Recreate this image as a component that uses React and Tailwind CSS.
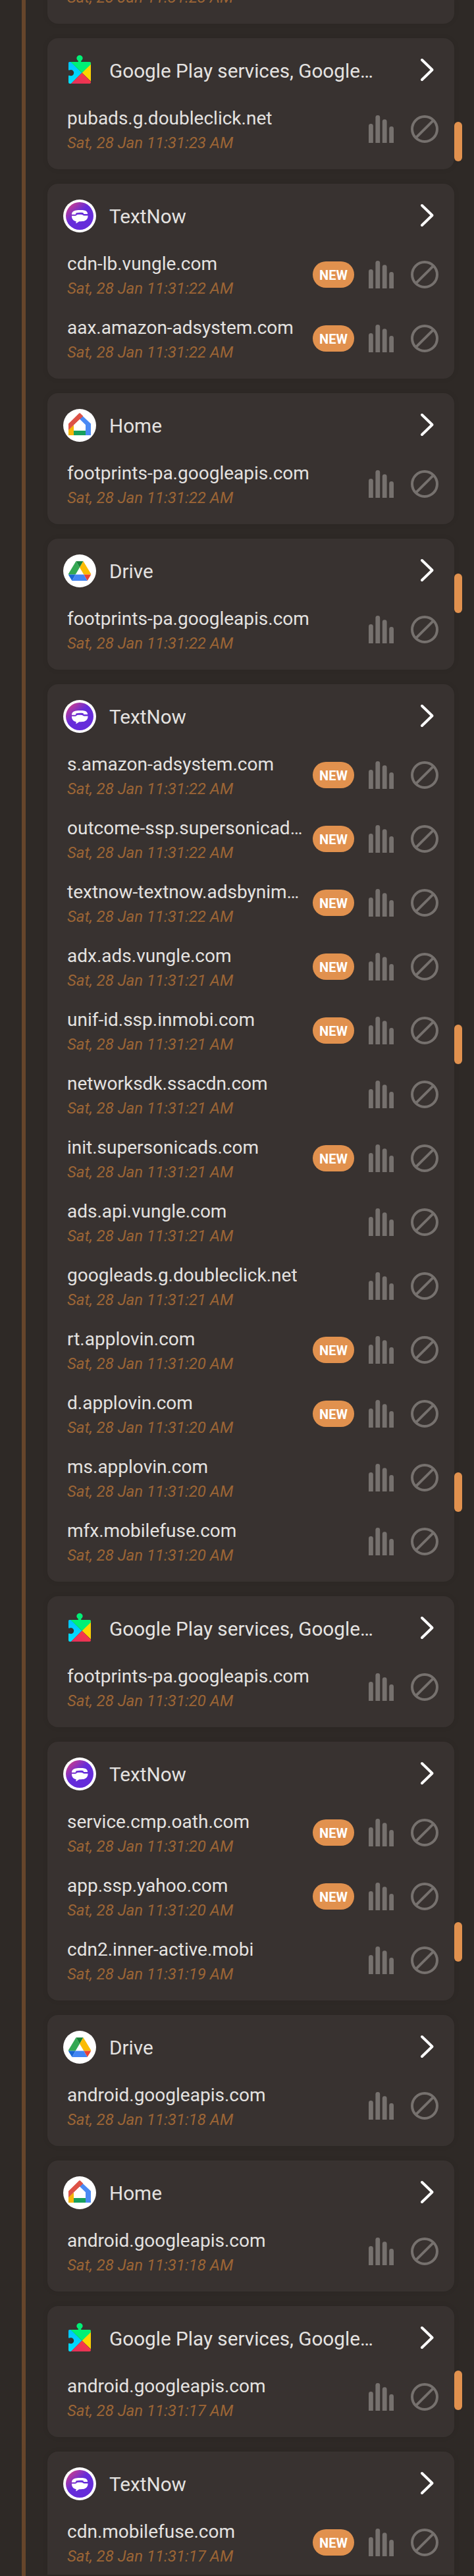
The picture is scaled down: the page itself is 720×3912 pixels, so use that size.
const groups = [
  { app: "play", name: "Google Play services, Google…", rows: [["pubads.g.doubleclick.net", "23"]] },
  { app: "textnow", name: "TextNow", rows: [["cdn-lb.vungle.com", "22", true], ["aax.amazon-adsystem.com", "22", true]] },
  { app: "home", name: "Home", rows: [["footprints-pa.googleapis.com", "22"]] },
  { app: "drive", name: "Drive", rows: [["footprints-pa.googleapis.com", "22"]] },
  {
    app: "textnow",
    name: "TextNow",
    rows: [
      ["s.amazon-adsystem.com", "22", true],
      ["outcome-ssp.supersonicad…", "22", true],
      ["textnow-textnow.adsbynim…", "22", true],
      ["adx.ads.vungle.com", "21", true],
      ["unif-id.ssp.inmobi.com", "21", true],
      ["networksdk.ssacdn.com", "21"],
      ["init.supersonicads.com", "21", true],
      ["ads.api.vungle.com", "21"],
      ["googleads.g.doubleclick.net", "21"],
      ["rt.applovin.com", "20", true],
      ["d.applovin.com", "20", true],
      ["ms.applovin.com", "20"],
      ["mfx.mobilefuse.com", "20"],
    ],
  },
  { app: "play", name: "Google Play services, Google…", rows: [["footprints-pa.googleapis.com", "20"]] },
  {
    app: "textnow",
    name: "TextNow",
    rows: [["service.cmp.oath.com", "20", true], ["app.ssp.yahoo.com", "20", true], ["cdn2.inner-active.mobi", "19"]],
  },
  { app: "drive", name: "Drive", rows: [["android.googleapis.com", "18"]] },
  { app: "home", name: "Home", rows: [["android.googleapis.com", "18"]] },
  { app: "play", name: "Google Play services, Google…", rows: [["android.googleapis.com", "17"]] },
  { app: "textnow", name: "TextNow", rows: [["cdn.mobilefuse.com", "17", true]] },
];

function PlayIcon() {
  return (
    <svg className="size-[50px]" viewBox="0 -1.6 50 50">
      <defs>
        <linearGradient id="playBlue" x1="0" y1="0" x2="0" y2="1">
          <stop offset="0" stopColor="#00c3ff" />
          <stop offset="1" stopColor="#00e2ff" />
        </linearGradient>
        <linearGradient id="playRed" x1="1" y1="0" x2="0" y2="1">
          <stop offset="0" stopColor="#ff3a44" />
          <stop offset="1" stopColor="#e0305c" />
        </linearGradient>
      </defs>
      <path d="M22.800 12V8.800a4.600 4.600 0 1 1 4.400 0V12z" fill="#00f076" />
      <path d="M11.500 10.400H9.600A1.600 1.600 0 0 0 8 12v10.800h1.800a4.600 4.600 0 1 1 0 8.400H8V41.400a2 2 0 0 0 2 2h2L28.500 27z" fill="url(#playBlue)" />
      <path d="M40.500 14L28.500 27 42 40V12a1.600 1.600 0 0 0-.5-1.200z" fill="#ffd400" />
      <path d="M12 43.400h28a2 2 0 0 0 2-2V40.300L28.500 27z" fill="url(#playRed)" />
      <path d="M11.200 10.400H40.400a1.600 1.600 0 0 1 1.400 1.500v2.500L28.500 27z" fill="#00f076" />
    </svg>
  );
}

function TextNowIcon() {
  return (
    <svg className="size-[50px]" viewBox="0 0 50 50">
      <defs>
        <linearGradient id="tnFill" x1="0.1" y1="0.1" x2="0.65" y2="0.7">
          <stop offset="0" stopColor="#c93c8e" />
          <stop offset="0.6" stopColor="#652cda" />
          <stop offset="1" stopColor="#652cda" />
        </linearGradient>
      </defs>
      <circle cx="25" cy="25" r="25" fill="#fff" />
      <circle cx="25" cy="25" r="21" fill="url(#tnFill)" />
      <path d="M13 22.800c0-3.600 2.500-5.600 6.500-6.200 3.500-.6 9.500-.6 12.500-.2 3 .5 5 2.200 5.200 5.600h-5.200c-.8 0-1.300-.4-1.300-1.200v-.6c-3.500-.6-8-.5-11.400.2v.9c0 .9-.5 1.500-1.300 1.500z" fill="#fff" />
      <path d="M13 24.800h5.500c1.200 0 1.700-1.300 2.700-1.700 1.500-.4 6-.4 7.800 0 1 .4 1.600 1.500 2.800 1.500h5.700c.2 4.800-2.500 7.800-7.500 8.500-1.700.2-4 .2-5.500.2-1.300.6-2.700 2-5.200 3l.4-3.100C15.500 32.500 12.800 29.500 13 24.800z" fill="#fff" />
    </svg>
  );
}

function HomeIcon() {
  return (
    <svg className="size-[50px]" viewBox="0 0 50 50">
      <circle cx="25" cy="25" r="25" fill="#fff" />
      <path d="M16 32.500h18V40H16z" fill="#17a05d" />
      <path d="M8 31l8-6.500V40H8z" fill="#f6b60b" />
      <path d="M25 6.500L42 22.500V40h-8V24.300L22 12.500z" fill="#4a8af4" />
      <path d="M25 6.300a1.500 1.500 0 0 1 1 .4l4.300 4.300L8 32V22.500L24 6.700a1.500 1.500 0 0 1 1-.4z" fill="#dd5246" />
      <path d="M25 16l9 8.700v8.300H16V24.700z" fill="#fff" />
    </svg>
  );
}

function DriveIcon() {
  return (
    <svg className="size-[50px]" viewBox="0 0 50 50">
      <circle cx="25" cy="25" r="25" fill="#fff" />
      <path d="M19.500 10.200h11L25 20z" fill="#188038" />
      <path d="M19.500 10.200L25 19.800 18.700 30.400H8l-.1-.8z" fill="#34a853" />
      <path d="M30.500 10.200L42.200 29.600v.8H31.300L25 19.800z" fill="#fbbc04" />
      <path d="M8 30.400h10.700L13.500 40 8.500 32z" fill="#1967d2" />
      <path d="M31.300 30.400H42.100L41.500 32 36.600 40z" fill="#ea4335" />
      <path d="M18.700 30.400h12.600L36.600 40H13.500z" fill="#4285f4" />
    </svg>
  );
}

const icons = { play: PlayIcon, textnow: TextNowIcon, home: HomeIcon, drive: DriveIcon };

function Chevron() {
  return (
    <svg className="mr-[30px] mb-0.5 h-[36px] w-[22px]" viewBox="0 0 22 36" fill="none">
      <path d="M3 3L18.500 18 3 33" stroke="#fff" strokeWidth="4" strokeLinecap="round" strokeLinejoin="round" />
    </svg>
  );
}

function Bars() {
  return (
    <svg className="h-[42px] w-[38px]" viewBox="0 0 38 42" fill="#76716e">
      <path d="M0 42V16.300a3.400 3.400 0 0 1 6.800 0V42z" />
      <path d="M10.400 42V3.400a3.400 3.400 0 0 1 6.800 0V42z" />
      <path d="M20.800 42V9.700a3.400 3.400 0 0 1 6.800 0V42z" />
      <path d="M31.200 42V20.400a3.400 3.400 0 0 1 6.800 0V42z" />
    </svg>
  );
}

function Block() {
  return (
    <svg className="mr-6 ml-[26px] size-[42px]" viewBox="0 0 42 42" fill="none" stroke="#76716e" strokeWidth="4">
      <circle cx="21" cy="21" r="19" />
      <path d="M7.800 34.200L34.200 7.800" />
    </svg>
  );
}

function Row({ domain, sec, isNew }) {
  return (
    <div className="flex h-[97px] items-center pb-px pl-[30px]">
      <div className="min-w-0 flex-1 pt-[5px] whitespace-nowrap">
        <div className="text-[28px] leading-[38px] text-[#e4e2e0]">{domain}</div>
        <div className="text-[24px] leading-[37px] text-[#9c6535] italic">Sat, 28 Jan 11:31:{sec} AM</div>
      </div>
      {isNew && (
        <span className="mr-[22px] flex h-10 w-[63px] items-center justify-center rounded-full bg-[#e1914e] pt-px text-[20px] font-bold text-white">
          NEW
        </span>
      )}
      <Bars />
      <Block />
    </div>
  );
}

function Card({ group, last }) {
  const Icon = icons[group.app];
  return (
    <section
      className={
        last
          ? "rounded-t-2xl bg-[#383230] shadow-[0_0_8px_rgba(0,0,0,0.08)]"
          : "rounded-2xl bg-[#383230] pb-3 shadow-[0_0_8px_rgba(0,0,0,0.08)]"
      }
    >
      <header className="flex h-[90px] items-center pt-2 pl-6">
        <Icon />
        <h2 className="ml-5 flex-1 pt-px text-[29.7px] leading-[36px] text-[#e4e2e0]">{group.name}</h2>
        <Chevron />
      </header>
      {group.rows.map(([domain, sec, isNew]) => (
        <Row key={domain} domain={domain} sec={sec} isNew={isNew} />
      ))}
    </section>
  );
}

function Thumb({ className }) {
  return <div className={"absolute left-[690px] h-[60px] w-3 rounded-full bg-[#e1914e] " + className} />;
}

export default function App() {
  return (
    <div className="relative flex h-[3912px] w-[720px] overflow-hidden bg-[#2e2926] font-['Roboto',sans-serif]">
      <div className="ml-[33px] w-1.5 shrink-0 bg-[#66452b]" />
      <main className="ml-[33px] flex w-[618px] shrink-0 flex-col gap-[22px]">
        <section className="h-9 shrink-0 overflow-hidden rounded-b-2xl bg-[#383230] pl-[30px] shadow-[0_0_8px_rgba(0,0,0,0.08)]">
          <div className="-mt-[22px] text-[24px] leading-[37px] text-[#9c6535] italic">Sat, 28 Jan 11:31:23 AM</div>
        </section>
        {groups.map((group, i) => (
          <Card key={i} group={group} last={i === groups.length - 1} />
        ))}
      </main>
      <Thumb className="top-[185px]" />
      <Thumb className="top-[871px]" />
      <Thumb className="top-[1556px]" />
      <Thumb className="top-[2236px]" />
      <Thumb className="top-[2919px]" />
      <Thumb className="top-[3600px]" />
    </div>
  );
}
